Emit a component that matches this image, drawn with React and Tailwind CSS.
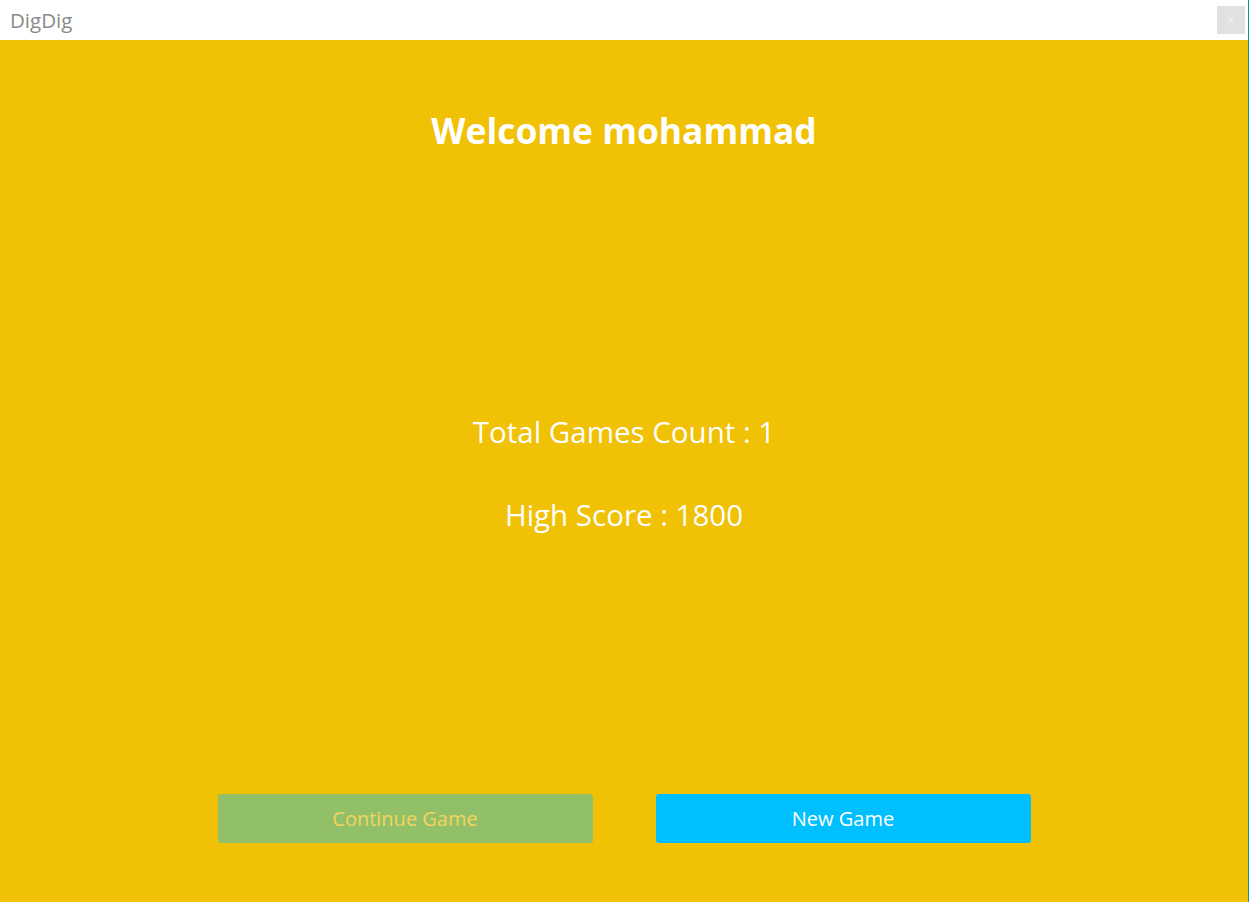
export default function App() {
  return (
    <div className="w-[1249px] h-[902px] flex flex-col overflow-hidden" style={{ fontFamily: '"Open Sans", "Noto Sans", sans-serif' }}>
      <div className="h-10 bg-white flex items-center justify-between pl-[10px] pr-[3px] border-r border-[#13968e]">
        <span className="text-[20.5px] text-[#8a8a8a] leading-none">DigDig</span>
        <div className="w-[28px] h-[28px] bg-[#e1e1e1] flex items-center justify-center text-[#f5f5f5] text-[13px] leading-none">×</div>
      </div>
      <div className="flex-1 bg-[#f0c105] border-r border-[#13968e] flex flex-col items-center">
        <h1 className="mt-[68px] text-[35.4px] font-bold text-white leading-[44px]">Welcome mohammad</h1>
        <div className="mt-[262px] text-[29.5px] text-white leading-[36px]">Total Games Count : 1</div>
        <div className="mt-[47px] text-[29.5px] text-white leading-[36px]">High Score : 1800</div>
        <div className="mt-[261px] flex gap-[63px]">
          <button className="w-[375px] h-[49px] rounded-[3px] bg-[#92c069] text-[#f5d45a] text-[20px]">Continue Game</button>
          <button className="w-[375px] h-[49px] rounded-[3px] bg-[#00bfff] text-white text-[20px]">New Game</button>
        </div>
      </div>
    </div>
  );
}
